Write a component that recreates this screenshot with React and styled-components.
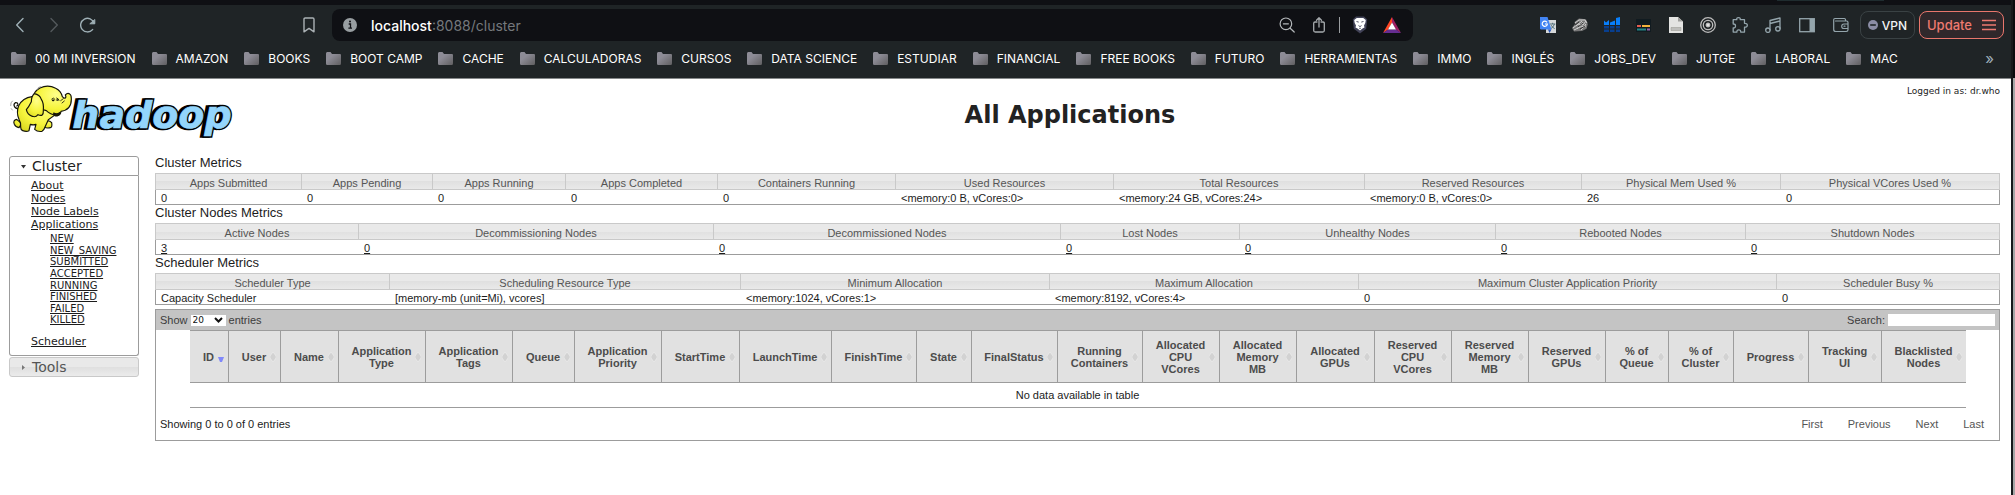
import React from "react";
import styled, { createGlobalStyle } from "styled-components";

const GlobalStyle = createGlobalStyle`
  * { box-sizing: border-box; }
  body { margin: 0; background: #fff; }
  a, button, input, select { font: inherit; color: inherit; }
  button { padding: 0; border: 0; background: none; }
`;

const ui = `Inter, "Liberation Sans", sans-serif`;
const verdana = `"DejaVu Sans", sans-serif`;
const helvetica = `"Liberation Sans", sans-serif`;

/* Window */

const Screen = styled.div`
  display: flex;
  min-height: 100vh;
`;

const Browser = styled.div`
  flex: 1;
  min-width: 0;
`;

const Neighbour = styled.div`
  width: 4px;
  border-left: 2px solid #17191b;
  background: linear-gradient(#0b0c0e 78px, #a6a6a6 78px);
`;

const Chrome = styled.header`
  background: #1f2426;
  border-bottom: 1px solid #858889;
  font-family: ${ui};
`;

const TabStrip = styled.div`
  display: flex;
  justify-content: flex-end;
  height: 5px;
  padding-right: 127px;
  background: #0f1014;
`;

const TabEdge = styled.div`
  width: 107px;
  height: 1px;
  background: #1f2c2f;
`;

const Toolbar = styled.div`
  display: flex;
  align-items: center;
  height: 40px;
  padding: 0 7px 0 12px;
`;

const NavGroup = styled.div`
  display: flex;
  align-items: center;
  gap: 18px;
  width: 287px;
`;

const IconButton = styled.button`
  display: grid;
  place-items: center;
  width: ${(p) => p.$w || 16}px;
  height: 20px;
`;

const AddressBar = styled.form`
  display: flex;
  align-items: center;
  flex: 1;
  height: 32px;
  margin: 0 127px 0 13px;
  padding: 0 9px 0 11px;
  border-radius: 8px;
  background: #0f1014;
  color: #fff;
  font-size: 14px;
`;

const Url = styled.span`
  flex: 1;
  margin-left: 14px;
  font-weight: 500;
`;

const UrlRest = styled.span`
  color: #75787c;
  font-weight: 400;
`;

const AddressTools = styled.div`
  display: flex;
  align-items: center;
  gap: 12px;
`;

const AddressDivider = styled.span`
  width: 1px;
  height: 16px;
  background: #9a9da0;
`;

const Extensions = styled.div`
  display: flex;
  align-items: center;
  gap: 16px;
  margin-right: 10px;
`;

const Pill = styled.button`
  display: flex;
  align-items: center;
  justify-content: center;
  gap: ${(p) => (p.$alert ? 10 : 4)}px;
  width: ${(p) => (p.$alert ? 85 : 55)}px;
  height: 28px;
  margin-right: ${(p) => (p.$alert ? 0 : 4)}px;
  border: 1px solid ${(p) => (p.$alert ? "#e9766c" : "#3a4244")};
  border-radius: 8px;
  background: ${(p) => (p.$alert ? "#30282b" : "transparent")};
  color: ${(p) => (p.$alert ? "#ee7a70" : "#f2f3f4")};
  font-size: ${(p) => (p.$alert ? 13 : 12)}px;
  font-weight: 500;
`;

const Bookmarks = styled.nav`
  display: flex;
  align-items: center;
  height: 33px;
  padding: 0 17px 6px 11px;
  gap: 16px;
  color: #fff;
  font-size: 12px;
  font-weight: 400;
`;

const Bookmark = styled.a`
  display: flex;
  align-items: center;
  gap: 9px;
  white-space: nowrap;
  text-decoration: none;
`;

const Overflow = styled.button`
  margin-left: auto;
  color: #9fb0bb;
  font-size: 15px;
  line-height: 20px;
`;

/* Hadoop page */

const Masthead = styled.div`
  display: flex;
  align-items: flex-start;
  height: 76px;
  padding: 6px 11px 0 10px;
  font-family: ${verdana};
  color: #222;
`;

const Title = styled.h1`
  flex: 1;
  margin: 14px 0 0;
  font-size: 24px;
  line-height: 32px;
  text-align: center;
`;

const Login = styled.div`
  font-size: 9px;
  line-height: 12px;
`;

const Columns = styled.div`
  display: flex;
  align-items: flex-start;
  gap: 16px;
  padding: 0 11px 0 9px;
`;

const Sidebar = styled.nav`
  width: 130px;
  margin-top: 1px;
  font-family: ${verdana};
  color: #1c1c1c;
`;

const Fold = styled.button`
  display: flex;
  align-items: center;
  gap: 6px;
  width: 100%;
  height: 20px;
  padding-left: 11px;
  border: 1px solid ${(p) => (p.$open ? "#9c9c9c" : "#c9c9c9")};
  border-radius: ${(p) => (p.$open ? "3px 3px 0 0" : "3px")};
  background: ${(p) =>
    p.$open ? "#fff" : "linear-gradient(#e9e9e9 50%, #dfdfdf 50%, #ebebeb)"};
  color: ${(p) => (p.$open ? "#212121" : "#555")};
  font-size: 14px;
  line-height: 18px;
`;

const Panel = styled.div`
  height: 180px;
  margin-bottom: 1px;
  padding: 3px 0 0 21px;
  border: 1px solid #9c9c9c;
  border-top: 0;
  border-radius: 0 0 3px 3px;
`;

const Links = styled.ul`
  display: grid;
  margin: 0;
  padding: 0;
  list-style: none;
  font-size: 11px;
  line-height: 13px;
`;

const SubLinks = styled(Links)`
  height: 93px;
  margin: 2px 0 9px;
  padding-left: 19px;
  font-size: 10px;
  line-height: 11px;
`;

const Content = styled.main`
  flex: 1;
  min-width: 0;
  font-family: ${helvetica};
  font-size: 11px;
  color: #1c1c1c;
`;

const SectionTitle = styled.h2`
  margin: 0;
  padding-bottom: 2px;
  font-size: 13px;
  font-weight: 400;
  line-height: 16px;
`;

const MetricsTable = styled.table`
  width: 100%;
  table-layout: fixed;
  border-spacing: 0;
  white-space: nowrap;
`;

const Col = styled.col`
  width: ${(p) => p.$w}px;
`;

const MetricHead = styled.th`
  height: 17px;
  padding: 3px 0 0;
  border: 1px solid #c9c9c9;
  border-right-width: 0;
  background: linear-gradient(#e9e9e9 50%, #e0e0e0 50%, #e9e9e9);
  color: #555;
  font-weight: 400;
  line-height: 12px;
  &:last-child { border-right-width: 1px; }
`;

const MetricCell = styled.td`
  height: 15px;
  padding: 2px 0 0 6px;
  border-bottom: 1px solid #9c9c9c;
  line-height: 12px;
  &:first-child { padding-left: 5px; border-left: 1px solid #9c9c9c; }
  &:last-child { border-right: 1px solid #9c9c9c; }
`;

const AppsPanel = styled.section`
  margin-top: 4px;
  border: 1px solid #9c9c9c;
`;

const AppsBar = styled.div`
  display: flex;
  justify-content: space-between;
  align-items: center;
  height: 20px;
  padding: 0 4px;
  background: #c4c4c4;
  color: #3c3c3c;
`;

const BarLabel = styled.label`
  display: flex;
  align-items: center;
  gap: 3px;
`;

const LengthSelect = styled.select`
  width: 35px;
  height: 11px;
  padding: 0 0 0 2px;
  border: 0;
  appearance: none;
  background: transparent;
  color: #111;
  font-family: ${verdana};
  font-size: 9px;
  line-height: 11px;
`;

const SelectBox = styled.span`
  display: grid;
  align-items: center;
  background: #fff;
  > * { grid-area: 1 / 1; }
  > svg { justify-self: end; margin-right: 3px; pointer-events: none; }
`;

const SearchInput = styled.input`
  width: 107px;
  height: 12px;
  padding: 0 2px;
  border: 0;
  background: #fff;
`;

const AppsTable = styled.table`
  width: calc(100% - 67px);
  margin: 0 auto;
  table-layout: fixed;
  border-spacing: 0;
  border-bottom: 1px solid #9c9c9c;
`;

const AppHead = styled.th`
  height: 53px;
  padding: 0;
  border: 1px solid #9c9c9c;
  border-width: 1px 0 1px 1px;
  background: #e1e1e1;
  color: #4c4c4c;
  &:first-child { border-left-width: 0; }
`;

const SortButton = styled.button`
  display: flex;
  align-items: center;
  width: 100%;
  padding: 0 4px 0 10px;
  font-weight: 700;
  line-height: 12px;
`;

const SortLabel = styled.span`
  flex: 1;
  white-space: pre;
  margin: 0 -8px 0 -4px;
  padding-right: 4px;
`;

const EmptyCell = styled.td`
  height: 24px;
  padding: 0;
  text-align: center;
`;

const AppsFooter = styled.div`
  display: flex;
  justify-content: space-between;
  align-items: center;
  height: 32px;
  padding: 0 15px 0 4px;
`;

const Pager = styled.div`
  display: flex;
  gap: 25px;
  color: #555;
`;

/* Drawings */

const line = { fill: "none", stroke: "#9fb0b6", strokeWidth: 1.4, strokeLinecap: "round", strokeLinejoin: "round" };

const Icon = ({ w = 16, h = 16, children, ...rest }) => (
  <svg width={w} height={h} viewBox={`0 0 ${w} ${h}`} aria-hidden="true" {...rest}>{children}</svg>
);

const Back = () => <Icon {...line}><path d="M11 1.5 4.7 8l6.3 6.5" /></Icon>;
const Forward = () => <Icon {...line} stroke="#53595c"><path d="M5 1.5 11.3 8 5 14.5" /></Icon>;
const Reload = () => (
  <Icon {...line}>
    <path d="M12.6 12.6A6.8 6.8 0 1 1 14 6.2" />
    <path d="M10.2 6.8h4.6V2.9Z" fill="#9fb0b6" strokeWidth="1" />
  </Icon>
);
const BookmarkIcon = () => <Icon {...line} stroke="#aab1b4"><path d="M3 2.2Q3 1 4.2 1h7.6Q13 1 13 2.2v12.6l-5-3.4-5 3.4Z" /></Icon>;
const Info = () => (
  <Icon w={14} h={14}>
    <circle cx="7" cy="7" r="7" fill="#989ea1" />
    <path d="M5.7 6h1.8v4M5.4 10.2h3.6" stroke="#0f1014" strokeWidth="1.3" fill="none" />
    <circle cx="7" cy="3.6" r="1" fill="#0f1014" />
  </Icon>
);
const ZoomOut = () => (
  <Icon {...line} stroke="#b4b8bb" strokeWidth="1.2">
    <circle cx="6.9" cy="6.8" r="5.8" /><path d="M11.2 11.2 15.2 15M4.4 6.8h5" />
  </Icon>
);
const Share = () => (
  <Icon {...line} stroke="#a6aaad" strokeWidth="1.3">
    <path d="M6 5H4Q2.700 5 2.700 6.300v7.200q0 1.500 1.500 1.500h7.600q1.500 0 1.500-1.500V6.300Q13.300 5 12 5h-2M8 10V1M5.500 3.200 8 .8l2.500 2.400" />
  </Icon>
);
const Brave = () => (
  <Icon h={18}>
    <path d="M4 .5h8l3.200 3-1 9.300L8 17.600l-6.200-4.800-1-9.300Z" fill="#414257" />
    <path d="M4.800 2h6.400l2.600 2-.5 3-1.300 2.600.5 1.800-2 1.200L8 14.600l-2.500-2-2-1.200.5-1.800L2.700 7l-.5-3Z" fill="#fff" />
    <path d="m4.500 5.500 2.200.6M11.500 5.500l-2.200.6M6.500 9.600 8 10.600l1.500-1M7.200 12.300h1.600" stroke="#414257" strokeWidth=".9" fill="none" />
  </Icon>
);
const Bat = () => (
  <Icon w={18}>
    <path d="M9 0 0 16l5.200-3.500L9 5.500Z" fill="#ff4724" />
    <path d="m9 0 9 16-5.200-3.500L9 5.500Z" fill="#9e1f63" />
    <path d="m0 16 5-3.500h8L18 16Z" fill="#662d91" />
    <path d="m9 5.500 4 7H5Z" fill="#fff" />
  </Icon>
);
const Translate = () => (
  <Icon>
    <rect x="6" y="3" width="10" height="13" fill="#d5d8d9" />
    <path d="M10 7h5.300M12.600 5.800V7M14.500 7q-.8 3-3.800 4.800M11.200 8.200q1.200 2.400 3.500 3.500" stroke="#52707b" strokeWidth="1" fill="none" />
    <path d="M0 0h7.500l4 12.500H1.200Q0 12.500 0 11.300Z" fill="#4284f3" />
    <path d="m8 12.500 3.500 0L9.500 16Z" fill="#2855b8" />
    <path d="M7 5.300A2.600 2.600 0 1 0 7.400 7H5" stroke="#fff" strokeWidth="1.200" fill="none" />
  </Icon>
);
const Rock = () => (
  <Icon>
    <path d="m0 11 3-4-.5-2L7 1.500l7 .7 1.800 5-1.300 4.500L10 14l-8 .5Z" fill="#777" />
    <path d="m3 6 4-3 6 0 2 3M1 11l5-4 5 1 3-4M2 13l6-3 6-1M4 9l6-5M5 12l6-7M9 13l5-6" stroke="#d0d0d0" strokeWidth="1" fill="none" />
    <path d="m3 8 4-3M6 10l5-4M8 12l5-3" stroke="#333" strokeWidth="1" />
  </Icon>
);
const Bars = () => (
  <Icon>
    <path d="M0 3.500 2 5.500 5 3v5H0ZM6 5.500l5-2V8H6ZM12 1l4-1v8h-4Z" fill="#087ffc" />
    <path d="M0 9h5v2.500H0ZM6 9h4.500v2.500H6ZM12 9h4v2.500h-4ZM0 12.500h5V15H0ZM6 12.500h4.500V15H6ZM12 12.500h4V15h-4Z" fill="#083f8f" />
  </Icon>
);
const Captions = () => (
  <Icon>
    <rect y="2" width="15" height="13" fill="#111b20" />
    <path d="M1 9h4" stroke="#e45c50" strokeWidth="2" /><path d="M6 9h8" stroke="#f3b23c" strokeWidth="2" />
    <path d="M1 12.500h9" stroke="#248786" strokeWidth="2" /><path d="M11 12.500h3" stroke="#9360a8" strokeWidth="2" />
  </Icon>
);
const Page = () => (
  <Icon>
    <path d="M1 0h9l5 4.500V16H1Z" fill="#e4e4e2" /><path d="M10 0v4.500h5Z" fill="#a0a09d" />
    <path d="M3 10.500h10v3H3Z" fill="#bebebb" stroke="#94948f" strokeWidth=".5" />
  </Icon>
);
const Target = () => (
  <Icon fill="none" stroke="#bdbdbd">
    <circle cx="8" cy="8" r="7.300" strokeWidth="1.300" /><circle cx="8" cy="8" r="4.700" strokeWidth="1.300" />
    <circle cx="8" cy="8" r="2" fill="#e2e2e2" />
  </Icon>
);
const Puzzle = () => (
  <Icon {...line} stroke="#94a5ac" strokeWidth="1.3">
    <path d="M1.200 2.700h3.600q-.5-2 1.700-2t1.700 2h4.300v3.600q2.800-.2 2.800 1.900t-2.800 1.900v5H8.700q.2-2.300-1.900-2.300t-1.900 2.300H1.200v-4.300q2.300.2 2.300-1.900T1.200 7Z" />
  </Icon>
);
const Music = () => (
  <Icon {...line} stroke="#94a5ac" strokeWidth="1.3">
    <path d="M5 13V3.500L15 1v10.500M5 6.500l10-2.500" /><circle cx="2.900" cy="13.200" r="2.200" /><circle cx="12.900" cy="11.800" r="2.200" />
  </Icon>
);
const SidePanel = () => (
  <Icon>
    <rect x=".7" y="1.700" width="14.600" height="13" fill="none" stroke="#94a5ac" strokeWidth="1.300" />
    <path d="M10.500 2H15v12.500h-4.500Z" fill="#94a5ac" />
  </Icon>
);
const Wallet = () => (
  <Icon {...line} stroke="#94a5ac" strokeWidth="1.2">
    <path d="M12.500 4V2.700Q12.500 1.500 11.300 1.500H2Q.7 1.500.7 2.800v9.700q0 2 2 2h10.600q1.700 0 1.700-1.700V5.500Q15 4 13.500 4H2.500M15 7h-4q-2.300 0-2.300 2.300T11 11.500h4M11 9.200h1" />
  </Icon>
);
const NoEntry = () => (
  <Icon w={10} h={10}><circle cx="5" cy="5" r="5" fill="#8b8da5" /><path d="M2.200 5h5.600" stroke="#1f2426" strokeWidth="1.600" /></Icon>
);
const Menu = () => (
  <Icon w={14} h={12} stroke="#ee7a70" strokeWidth="1.300"><path d="M0 1.500h14M0 6h14M0 10.500h14" /></Icon>
);
const Folder = () => (
  <Icon w={15} h={13}>
    <defs>
      <linearGradient id="folder" x1="0" y1="0" x2="1" y2="1">
        <stop offset=".35" stopColor="#8d8c96" /><stop offset="1" stopColor="#5f5e60" />
      </linearGradient>
    </defs>
    <path d="M0 1.500Q0 0 1.200 0H4.500L6 2h8q1 0 1 1v8.500Q15 13 13.700 13H1.300Q0 13 0 11.700Z" fill="url(#folder)" />
  </Icon>
);
const Triangle = ({ open }) => (
  <Icon w={5} h={5}><path d={open ? "M0 1h5L2.500 4.500Z" : "M1 0v5l3-2.500Z"} fill={open ? "#333" : "#777"} /></Icon>
);
const Chevron = () => (
  <Icon w={9} h={6} fill="none" stroke="#111" strokeWidth="2"><path d="m1 1 3.500 3.500L8 1" /></Icon>
);
const Sorter = ({ active }) =>
  active ? (
    <Icon w={6} h={10}><path d="M0 5h6L4 10H2Z" fill="#8088fa" /></Icon>
  ) : (
    <Icon w={6} h={10}><path d="M3 0 6 4v2L3 10 0 6V4Z" fill="#d2d2d2" stroke="#f0f0f0" strokeWidth=".6" /></Icon>
  );

const Logo = () => (
  <svg width="223" height="53" viewBox="30 30 669 159" role="img" aria-label="hadoop">
    <defs>
      <radialGradient id="hide" cx=".6" cy=".3" r=".8">
        <stop offset="0" stopColor="#ffff8a" /><stop offset=".6" stopColor="#f6f43c" /><stop offset="1" stopColor="#d9d820" />
      </radialGradient>
    </defs>
    <g fontFamily="DejaVu Sans" fontWeight="700" fontStyle="italic" fontSize="114" strokeLinejoin="miter">
      <text x="210" y="160" fill="#000" stroke="#000" strokeWidth="10">hadoop</text>
      <text x="217" y="160" fill="#000" stroke="#000" strokeWidth="10">hadoop</text>
      <text x="217" y="160" fill="#93d5fc" stroke="#93d5fc" strokeWidth="2">hadoop</text>
    </g>
    <g fill="url(#hide)" stroke="#15150a" strokeWidth="3.500" strokeLinejoin="round" strokeLinecap="round">
      <path d="M60 100q-10 3-16-4-5-8 2-13 7-1 8 5 0 4-4 5" fill="none" />
      <path d="M50 133q-12 3-7 15 4 9 14 10l8-12ZM138 138q10-3 17 5 2 12-2 14-11 4-20 0Z" />
      <path d="M96 65q-28 4-40 27-8 20 1 41 6 9 5 24 0 8 6 10 12 4 19 0l4-19q9 3 17 0l-4 15q8 8 22 6 6-3 9-13l10-22q20-12 33-29Z" />
      <path d="M100 77q-4-25 20-38 24-12 47 1 16 8 20 25 5 6 9 4 3-3 0-9 7-8 13-3 5 2 5 14 1 34-31 38-2 13-13 12-20-2-31-14-28-7-39-30Z" />
      <path d="M103 56q-9 8-9 24-8 16-15 24 3 15 18 20 10 4 17-5 17 8 16-12 2-23-6-34-5-14-21-17Z" />
      <path d="M161 114q9 6 19-2-5 14-15 10-5-3-4-8Z" fill="#26200a" />
      <path d="M155 72q5-7 10 1M170 69q6 1 7 7M182 77l8-6M186 84l7-6" fill="none" strokeWidth="2.500" />
      <path d="M158 76h3M171 75h2" strokeWidth="5" />
      <path d="M112 44q1-9 10-9M32 92q-1-10 5-14M37 105l-3-4" fill="none" strokeWidth="2" stroke="#777" />
    </g>
  </svg>
);

/* Data */

const bookmarks = [
  "00 MI INVERSION", "AMAZON", "BOOKS", "BOOT CAMP", "CACHE", "CALCULADORAS", "CURSOS",
  "DATA SCIENCE", "ESTUDIAR", "FINANCIAL", "FREE BOOKS", "FUTURO", "HERRAMIENTAS", "IMMO",
  "INGLÉS", "JOBS_DEV", "JUTGE", "LABORAL", "MAC",
];

const extensions = [
  ["Translate", Translate], ["Rock", Rock], ["Statistics", Bars], ["Captions", Captions],
  ["Page", Page], ["Target", Target], ["Extensions", Puzzle], ["Playlist", Music, 18],
  ["Side panel", SidePanel, 18], ["Wallet", Wallet, 18],
];

const states = ["NEW", "NEW_SAVING", "SUBMITTED", "ACCEPTED", "RUNNING", "FINISHED", "FAILED", "KILLED"];

const clusterMetrics = [
  ["Apps Submitted", "0", 146], ["Apps Pending", "0", 131], ["Apps Running", "0", 133],
  ["Apps Completed", "0", 152], ["Containers Running", "0", 178],
  ["Used Resources", "<memory:0 B, vCores:0>", 218],
  ["Total Resources", "<memory:24 GB, vCores:24>", 251],
  ["Reserved Resources", "<memory:0 B, vCores:0>", 217],
  ["Physical Mem Used %", "26", 199], ["Physical VCores Used %", "0", 220],
];

const nodeMetrics = [
  ["Active Nodes", "3", 203], ["Decommissioning Nodes", "0", 355], ["Decommissioned Nodes", "0", 347],
  ["Lost Nodes", "0", 179], ["Unhealthy Nodes", "0", 256], ["Rebooted Nodes", "0", 250],
  ["Shutdown Nodes", "0", 255],
];

const schedulerMetrics = [
  ["Scheduler Type", "Capacity Scheduler", 234],
  ["Scheduling Resource Type", "[memory-mb (unit=Mi), vcores]", 351],
  ["Minimum Allocation", "<memory:1024, vCores:1>", 309],
  ["Maximum Allocation", "<memory:8192, vCores:4>", 309],
  ["Maximum Cluster Application Priority", "0", 418], ["Scheduler Busy %", "0", 224],
];

const appColumns = [
  ["ID", 38], ["User", 52], ["Name", 58], ["Application\nType", 87], ["Application\nTags", 87],
  ["Queue", 62], ["Application\nPriority", 87], ["StartTime", 78], ["LaunchTime", 92],
  ["FinishTime", 85], ["State", 55], ["FinalStatus", 86], ["Running\nContainers", 85],
  ["Allocated\nCPU\nVCores", 77], ["Allocated\nMemory\nMB", 77], ["Allocated\nGPUs", 78],
  ["Reserved\nCPU\nVCores", 77], ["Reserved\nMemory\nMB", 77], ["Reserved\nGPUs", 77],
  ["% of\nQueue", 63], ["% of\nCluster", 65], ["Progress", 75], ["Tracking\nUI", 73],
  ["Blacklisted\nNodes", 85],
];

const Metrics = ({ title, items, linked }) => (
  <section>
    <SectionTitle>{title}</SectionTitle>
    <MetricsTable aria-label={title}>
      <colgroup>{items.map(([name, , w]) => <Col key={name} $w={w} />)}</colgroup>
      <thead>
        <tr>{items.map(([name]) => <MetricHead key={name} scope="col">{name}</MetricHead>)}</tr>
      </thead>
      <tbody>
        <tr>
          {items.map(([name, value]) => (
            <MetricCell key={name}>{linked ? <a href="#nodes">{value}</a> : value}</MetricCell>
          ))}
        </tr>
      </tbody>
    </MetricsTable>
  </section>
);

export default function App() {
  return (
    <Screen>
      <GlobalStyle />
      <Browser>
        <Chrome>
          <TabStrip><TabEdge /></TabStrip>
          <Toolbar>
            <NavGroup>
              <IconButton aria-label="Back"><Back /></IconButton>
              <IconButton aria-label="Forward"><Forward /></IconButton>
              <IconButton aria-label="Reload"><Reload /></IconButton>
            </NavGroup>
            <IconButton $w={20} aria-label="Bookmark this page"><BookmarkIcon /></IconButton>
            <AddressBar>
              <Info />
              <Url>localhost<UrlRest>:8088/cluster</UrlRest></Url>
              <AddressTools>
                <IconButton type="button" $w={24} aria-label="Zoom out"><ZoomOut /></IconButton>
                <IconButton type="button" aria-label="Share"><Share /></IconButton>
                <AddressDivider />
                <IconButton type="button" aria-label="Shields"><Brave /></IconButton>
                <IconButton type="button" $w={24} aria-label="Rewards"><Bat /></IconButton>
              </AddressTools>
            </AddressBar>
            <Extensions>
              {extensions.map(([name, Glyph, w]) => (
                <IconButton key={name} $w={w} aria-label={name}><Glyph /></IconButton>
              ))}
            </Extensions>
            <Pill><NoEntry />VPN</Pill>
            <Pill $alert>Update<Menu /></Pill>
          </Toolbar>
          <Bookmarks aria-label="Bookmarks">
            {bookmarks.map((name) => <Bookmark key={name} href="#bookmark"><Folder />{name}</Bookmark>)}
            <Overflow aria-label="More bookmarks">»</Overflow>
          </Bookmarks>
        </Chrome>
        <Masthead>
          <Logo />
          <Title>All Applications</Title>
          <Login>Logged in as: dr.who</Login>
        </Masthead>
        <Columns>
          <Sidebar>
            <Fold $open aria-expanded="true"><Triangle open />Cluster</Fold>
            <Panel>
              <Links>
                {["About", "Nodes", "Node Labels", "Applications"].map((name) => (
                  <li key={name}><a href="#cluster">{name}</a></li>
                ))}
              </Links>
              <SubLinks>
                {states.map((name) => <li key={name}><a href="#apps">{name}</a></li>)}
              </SubLinks>
              <Links><li><a href="#scheduler">Scheduler</a></li></Links>
            </Panel>
            <Fold aria-expanded="false"><Triangle />Tools</Fold>
          </Sidebar>
          <Content>
            <Metrics title="Cluster Metrics" items={clusterMetrics} />
            <Metrics title="Cluster Nodes Metrics" items={nodeMetrics} linked />
            <Metrics title="Scheduler Metrics" items={schedulerMetrics} />
            <AppsPanel>
              <AppsBar>
                <BarLabel>
                  Show
                  <SelectBox>
                    <LengthSelect defaultValue="20">
                      <option>20</option><option>40</option><option>60</option>
                    </LengthSelect>
                    <Chevron />
                  </SelectBox>
                  entries
                </BarLabel>
                <BarLabel>Search:<SearchInput type="text" /></BarLabel>
              </AppsBar>
              <AppsTable aria-label="Applications">
                <colgroup>{appColumns.map(([name, w]) => <Col key={name} $w={w} />)}</colgroup>
                <thead>
                  <tr>
                    {appColumns.map(([name], i) => (
                      <AppHead key={name} scope="col">
                        <SortButton><SortLabel>{name}</SortLabel><Sorter active={i === 0} /></SortButton>
                      </AppHead>
                    ))}
                  </tr>
                </thead>
                <tbody>
                  <tr><EmptyCell colSpan={appColumns.length}>No data available in table</EmptyCell></tr>
                </tbody>
              </AppsTable>
              <AppsFooter>
                <span>Showing 0 to 0 of 0 entries</span>
                <Pager>
                  {["First", "Previous", "Next", "Last"].map((name) => <button key={name}>{name}</button>)}
                </Pager>
              </AppsFooter>
            </AppsPanel>
          </Content>
        </Columns>
      </Browser>
      <Neighbour />
    </Screen>
  );
}
